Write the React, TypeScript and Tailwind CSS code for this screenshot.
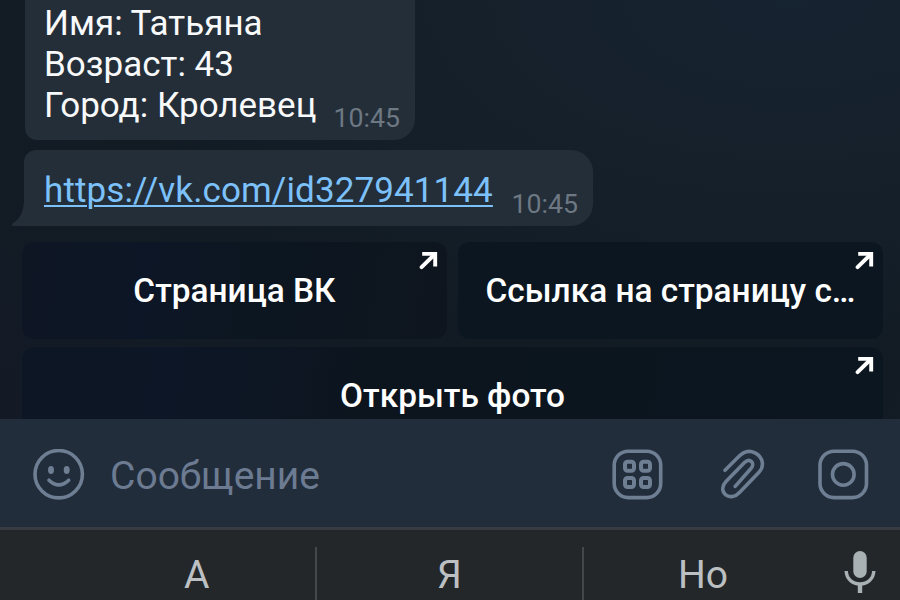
import React from "react";

function LinkArrow() {
  return (
    <svg className="absolute right-[9px] top-[9px]" width="19" height="19" viewBox="0 0 19 19" fill="none" stroke="#fff" strokeWidth="3.9">
      <path d="M3.2 2.9H16.2V15.6" />
      <path d="M16 3L2.6 16.2" strokeLinecap="round" />
    </svg>
  );
}

function KeyboardButton({ label, className }: { label: string; className: string }) {
  return (
    <div className={`relative flex h-[97px] items-center justify-center rounded-[12px] ${className}`}>
      <span className="whitespace-nowrap text-[33.4px] font-medium leading-[40px] text-white">{label}</span>
      <LinkArrow />
    </div>
  );
}

function Messages() {
  return (
    <div className="flex flex-col items-start">
      <div className="ml-[25px] flex h-[140px] w-[390px] items-end justify-between rounded-bl-[12px] rounded-br-[21px] bg-[#232e39] pl-[19px] pr-[15px]">
        <div className="mb-[14px] whitespace-nowrap text-[35px] leading-[41px] text-[#f8f9fa]">
          <div>Имя: Татьяна</div>
          <div>Возраст: 43</div>
          <div>Город: Кролевец</div>
        </div>
        <span className="mb-[7px] text-[26.7px] leading-[30px] text-[#6d7883]">10:45</span>
      </div>
      <div className="relative ml-[24px] mt-[10px] flex h-[76px] w-[569px] items-end justify-between rounded-br-[22px] rounded-tl-[12px] rounded-tr-[22px] bg-[#232e39] pl-[20px] pr-[15px]">
        <svg className="absolute -left-[13px] bottom-0" width="14" height="28" viewBox="0 0 14 28">
          <path d="M13 0H14V28H2Q0 27 1.5 25.5Q12 20 13 4Z" fill="#232e39" />
        </svg>
        <span className="mb-[15px] whitespace-nowrap text-[35px] leading-[41px] tracking-[0.11px] text-[#7cc1fa] underline decoration-[2px] underline-offset-[3px]">https://vk.com/id327941144</span>
        <span className="mb-[7px] text-[26.7px] leading-[30px] text-[#6d7883]">10:45</span>
      </div>
    </div>
  );
}

function Composer() {
  return (
    <div className="flex h-[108px] items-center bg-[#222d3b] pl-[33px] pr-[30px] pt-[4px]">
      <svg width="52" height="52" viewBox="0 0 52 52" fill="none" stroke="#6e7e93" strokeWidth="3.6" strokeLinecap="round">
        <circle cx="25.7" cy="25.2" r="23.7" />
        <ellipse cx="18" cy="21" rx="3" ry="3.9" fill="#6e7e93" stroke="none" />
        <ellipse cx="33.7" cy="21" rx="3" ry="3.9" fill="#6e7e93" stroke="none" />
        <path d="M16 31.2Q25.8 40.5 35.7 31.2" />
      </svg>
      <span className="ml-[25px] mt-[2px] text-[39px] leading-[44px] text-[#6c7b91]">Сообщение</span>
      <div className="ml-auto flex items-center text-[#6e7e93]">
        <svg width="52" height="52" viewBox="0 0 52 52" fill="none" stroke="currentColor" strokeWidth="3.6">
          <rect x="2.2" y="2.2" width="46.5" height="46.4" rx="14" />
          <g strokeWidth="4">
            <rect x="13" y="12.8" width="9" height="9" rx="2.5" />
            <rect x="29" y="12.8" width="9" height="9" rx="2.5" />
            <rect x="13" y="29" width="9" height="9" rx="2.5" />
            <rect x="29" y="29" width="9" height="9" rx="2.5" />
          </g>
        </svg>
        <svg className="ml-[56px]" width="48" height="52" viewBox="0 0 48 52" fill="none" stroke="currentColor" strokeWidth="3.6" strokeLinecap="round" strokeLinejoin="round">
          <path d="M5 21.3L18.5 7.8C23 3 29 0.8 35 3.8C42.7 7.6 45 17 39 23.3L19.5 43.4C15.5 47.7 9.7 49.1 5.7 45.9C1.2 42 2.2 36.3 6 32.4L24.5 13.5C30 8.4 35.4 14.4 31.2 19.2L15.2 37.4" />
        </svg>
        <svg className="ml-[50px]" width="52" height="52" viewBox="0 0 52 52" fill="none" stroke="currentColor" strokeWidth="3.6">
          <rect x="2" y="2.2" width="46.5" height="46.4" rx="14" />
          <circle cx="25.3" cy="25.4" r="10.8" />
        </svg>
      </div>
    </div>
  );
}

function SuggestionBar() {
  return (
    <div className="flex h-[73px] border-t-[3px] border-[#363c41] bg-[#23272a] text-[39px] leading-[46px] text-[#bcc0c2]">
      <div className="w-[315px] pl-[184px] pt-[22px]">А</div>
      <div className="mt-[17px] w-[2px] bg-[#44484b]" />
      <div className="w-[265px] pt-[22px] text-center">Я</div>
      <div className="mt-[17px] w-[2px] bg-[#44484b]" />
      <div className="pl-[94px] pt-[22px]">Но</div>
      <svg className="ml-auto mr-[24px] mt-[20px]" width="32" height="44" viewBox="0 0 32 44" fill="none">
        <rect x="9.3" y="1" width="13.4" height="27" rx="6.7" fill="#a9b1b4" />
        <path d="M2.2 21C2.5 29 8.5 34 16 34S29.5 29 29.8 21" stroke="#a9b1b4" strokeWidth="3.4" />
        <path d="M16 34V43" stroke="#a9b1b4" strokeWidth="4.4" />
      </svg>
    </div>
  );
}

export default function App() {
  return (
    <div className="flex h-[600px] w-[900px] flex-col overflow-hidden bg-[#131b25] font-['Roboto',sans-serif]">
      <div className="h-[419px] overflow-hidden bg-[radial-gradient(ellipse_at_88%_0%,#162330_0%,#151f29_38%,#121b24_62%,#131a26_100%)]">
        <Messages />
        <div className="ml-[22px] mt-[16px] flex w-[861px] flex-col gap-[8px]">
          <div className="flex gap-[11px]">
            <KeyboardButton label="Страница ВК" className="w-[425px] bg-[linear-gradient(100deg,#0e1624_0%,#0d1626_30%,#0c1620_55%,#0e151f_100%)]" />
            <KeyboardButton label="Ссылка на страницу с…" className="w-[425px] bg-[#0c1620]" />
          </div>
          <KeyboardButton label="Открыть фото" className="w-full bg-[linear-gradient(100deg,#0d1624_0%,#0d1626_18%,#0c151e_40%,#0c1620_100%)]" />
        </div>
      </div>
      <Composer />
      <SuggestionBar />
    </div>
  );
}
